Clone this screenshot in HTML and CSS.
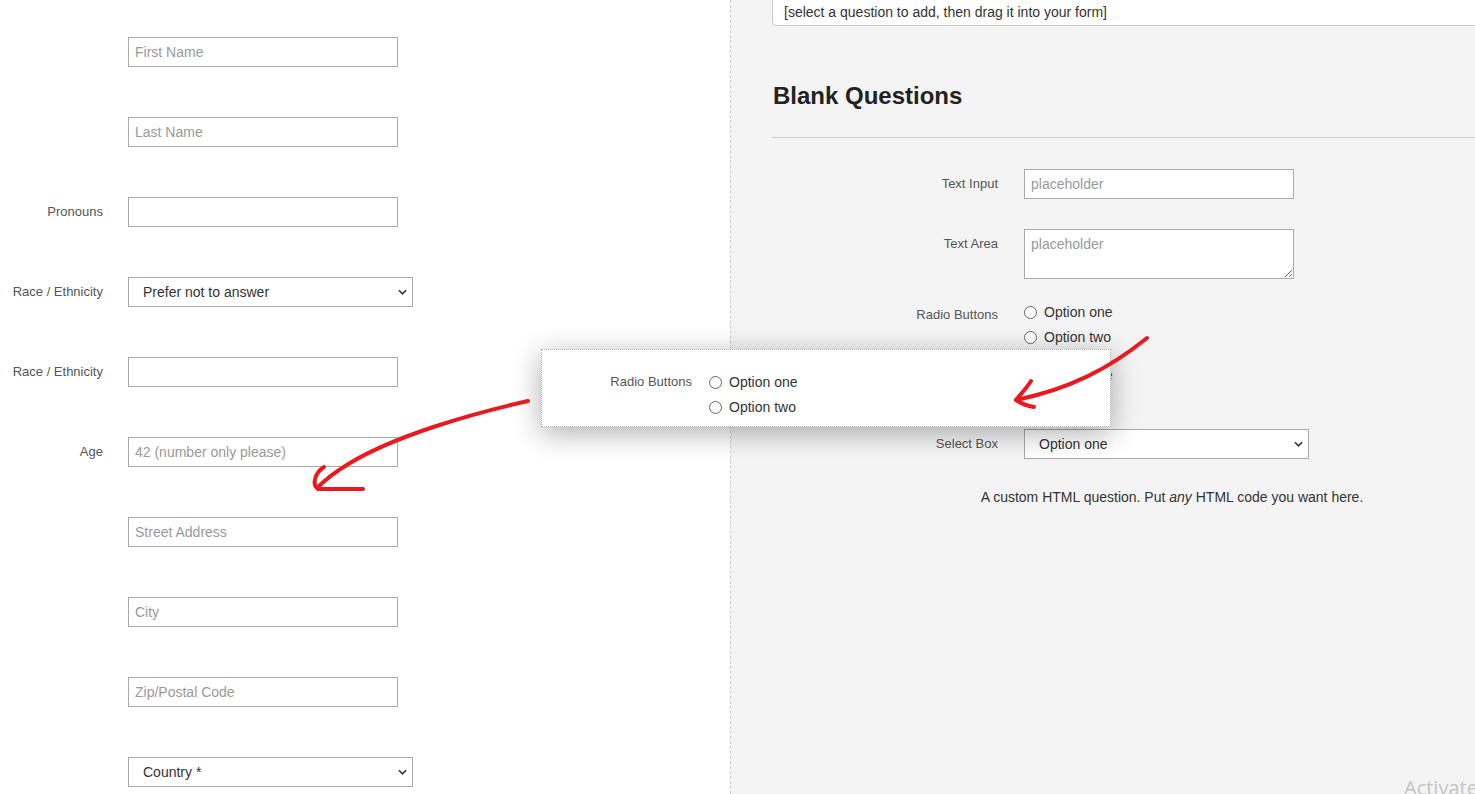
FILE: index.html
```html
<!DOCTYPE html>
<html>
<head>
<meta charset="utf-8">
<link rel="stylesheet" href="styles.css">
</head>
<body>
<div class="page">
  <section class="left">
    <form class="form form-left">
      <div class="row"><label class="lbl"></label><input class="inp" placeholder="First Name"></div>
      <div class="row"><label class="lbl"></label><input class="inp" placeholder="Last Name"></div>
      <div class="row"><label class="lbl">Pronouns</label><input class="inp"></div>
      <div class="row"><label class="lbl">Race / Ethnicity</label>
        <div class="sel-wrap"><select class="sel"><option>Prefer not to answer</option></select>
          <svg class="chev" viewBox="0 0 10 6"><path d="M1 1 L5 5 L9 1" fill="none" stroke="#333" stroke-width="1.8"/></svg></div></div>
      <div class="row"><label class="lbl">Race / Ethnicity</label><input class="inp"></div>
      <div class="row"><label class="lbl">Age</label><input class="inp" placeholder="42 (number only please)"></div>
      <div class="row"><label class="lbl"></label><input class="inp" placeholder="Street Address"></div>
      <div class="row"><label class="lbl"></label><input class="inp" placeholder="City"></div>
      <div class="row"><label class="lbl"></label><input class="inp" placeholder="Zip/Postal Code"></div>
      <div class="row"><label class="lbl"></label>
        <div class="sel-wrap"><select class="sel"><option>Country *</option></select>
          <svg class="chev" viewBox="0 0 10 6"><path d="M1 1 L5 5 L9 1" fill="none" stroke="#333" stroke-width="1.8"/></svg></div></div>
    </form>
  </section>
  <section class="right">
    <div class="inner">
      <div class="picker">[select a question to add, then drag it into your form]</div>
      <h2 class="title">Blank Questions</h2>
      <hr class="rule">
      <div class="form form-right">
        <div class="rrow"><label class="lbl">Text Input</label><input class="inp" placeholder="placeholder"></div>
        <div class="rrow"><label class="lbl">Text Area</label><textarea class="ta" placeholder="placeholder"></textarea></div>
        <div class="rrow radios-row"><label class="lbl">Radio Buttons</label>
          <div class="opts">
            <div class="opt"><span class="radio"></span>Option one</div>
            <div class="opt"><span class="radio"></span>Option two</div>
          </div></div>
        <div class="rrow checks-row"><label class="lbl">Checkboxes</label>
          <div class="opts">
            <div class="opt"><span class="check"></span>Option one</div>
            <div class="opt"><span class="check"></span>Option two</div>
          </div></div>
        <div class="rrow"><label class="lbl">Select Box</label>
          <div class="sel-wrap"><select class="sel"><option>Option one</option></select>
            <svg class="chev" viewBox="0 0 10 6"><path d="M1 1 L5 5 L9 1" fill="none" stroke="#333" stroke-width="1.8"/></svg></div></div>
        <p class="custom">A custom HTML question. Put <em>any</em> HTML code you want here.</p>
      </div>
    </div>
  </section>
</div>

<div class="drag">
  <label class="lbl">Radio Buttons</label>
  <div class="opts">
    <div class="opt"><span class="radio"></span>Option one</div>
    <div class="opt"><span class="radio"></span>Option two</div>
  </div>
</div>

<svg class="arrows" viewBox="0 0 1475 794" width="1475" height="794">
  <g fill="none" stroke="#e8191f" stroke-width="4" stroke-linecap="round" stroke-linejoin="round">
    <path d="M528 401 C470 414 395 436 350 463 C335 472 325 480 318 487"/>
    <path d="M324 467 C316 472 311 484 318 489 L363 489"/>
    <path d="M1147 338 C1110 368 1070 389 1016 400"/>
    <path d="M1031 381 C1026 389 1019 396 1016 400 C1022 404 1028 406 1034 407"/>
  </g>
</svg>

<div class="watermark">Activate</div>
</body>
</html>
```
FILE: styles.css
```css
* { box-sizing: border-box; }
html, body { margin: 0; padding: 0; }
body {
  width: 1475px;
  height: 794px;
  overflow: hidden;
  font-family: "Liberation Sans", Arial, sans-serif;
  color: #333;
  position: relative;
}
.page {
  display: flex;
  height: 794px;
}
.left {
  width: 731px;
  flex: none;
  background: #fff;
  border-right: 1px dashed #c8c8c8;
}
.right {
  flex: 1;
  background: #f4f4f4;
  overflow: hidden;
  padding-left: 41px;
}
.inner {
  width: 800px;
}
.form-left {
  padding-top: 37px;
  display: flex;
  flex-direction: column;
  gap: 50px;
}
.row {
  display: grid;
  grid-template-columns: 103px auto;
  column-gap: 25px;
  align-items: center;
  justify-content: start;
}
.lbl {
  font-size: 13px;
  color: #555;
  text-align: right;
  line-height: 30px;
  white-space: nowrap;
}
.inp {
  width: 270px;
  height: 30px;
  border: 1px solid #aaa;
  border-radius: 0;
  padding: 0 6px;
  font-family: "Liberation Sans", Arial, sans-serif;
  font-size: 14px;
  color: #333;
  background: #fff;
  outline: none;
}
.inp::placeholder, .ta::placeholder { color: #999; }
.sel-wrap {
  position: relative;
  width: 285px;
  height: 30px;
}
.sel {
  appearance: none;
  -webkit-appearance: none;
  width: 285px;
  height: 30px;
  border: 1px solid #aaa;
  border-radius: 0;
  background: #fff;
  font-family: "Liberation Sans", Arial, sans-serif;
  font-size: 14px;
  color: #333;
  padding: 0 14px;
  outline: none;
}
.chev {
  position: absolute;
  right: 6px;
  top: 12px;
  width: 9px;
  height: 6px;
  pointer-events: none;
}
.picker {
  margin-top: -6px;
  height: 32px;
  background: #fff;
  border: 1px solid #ccc;
  border-radius: 0 0 4px 4px;
  padding: 9px 11px 0;
  font-size: 14px;
  line-height: 16px;
  color: #333;
}
.title {
  margin: 56px 0 0 1px;
  font-size: 24px;
  line-height: 28px;
  font-weight: bold;
  color: #222;
}
.rule {
  margin: 27px 0 0;
  border: 0;
  border-top: 1px solid #ccc;
  height: 0;
}
.form-right {
  padding-top: 31px;
}
.rrow {
  display: grid;
  grid-template-columns: 226px auto;
  column-gap: 26px;
  align-items: start;
  justify-content: start;
  margin-bottom: 30px;
}
.ta {
  width: 270px;
  height: 50px;
  border: 1px solid #aaa;
  border-radius: 0;
  padding: 6px 6px;
  font-family: "Liberation Sans", Arial, sans-serif;
  font-size: 14px;
  line-height: 16px;
  color: #333;
  background: #fff;
  resize: both;
  display: block;
}
.rrow:nth-child(2) { margin-bottom: 20px; }
.radios-row .lbl { line-height: 31px; }
.opts {
  display: flex;
  flex-direction: column;
}
.opt {
  display: flex;
  align-items: center;
  gap: 7px;
  height: 25px;
  font-size: 14px;
  color: #333;
  white-space: nowrap;
}
.radio {
  width: 13px;
  height: 13px;
  border: 1px solid #666;
  border-radius: 50%;
  background: #fff;
  flex: none;
  margin-top: 2px;
}
.check {
  width: 13px;
  height: 13px;
  border: 1px solid #666;
  border-radius: 2px;
  background: #fff;
  flex: none;
  margin-top: 2px;
}
.radios-row { margin-bottom: 13px; }
.checks-row { margin-bottom: 17px; }
.custom {
  margin: 8px 0 0;
  text-align: center;
  font-size: 14px;
  color: #333;
}
.drag {
  position: absolute;
  left: 541px;
  top: 349px;
  width: 570px;
  height: 78px;
  background: #fff;
  border: 1px dotted #aaa;
  box-shadow: 0 6px 28px rgba(0, 0, 0, 0.32);
  display: grid;
  grid-template-columns: 150px auto;
  column-gap: 16px;
  align-items: start;
  padding-top: 19px;
}
.drag .lbl {
  font-size: 13px;
  line-height: 26px;
}
.drag .opt { height: 25px; }
.drag .opts { padding-left: 1px; }
.arrows {
  position: absolute;
  left: 0;
  top: 0;
  pointer-events: none;
}
.watermark {
  position: absolute;
  left: 1404px;
  top: 774px;
  font-family: "Open Sans", "Noto Sans", sans-serif;
  font-size: 20px;
  color: #c4c4c4;
  white-space: nowrap;
}
```
